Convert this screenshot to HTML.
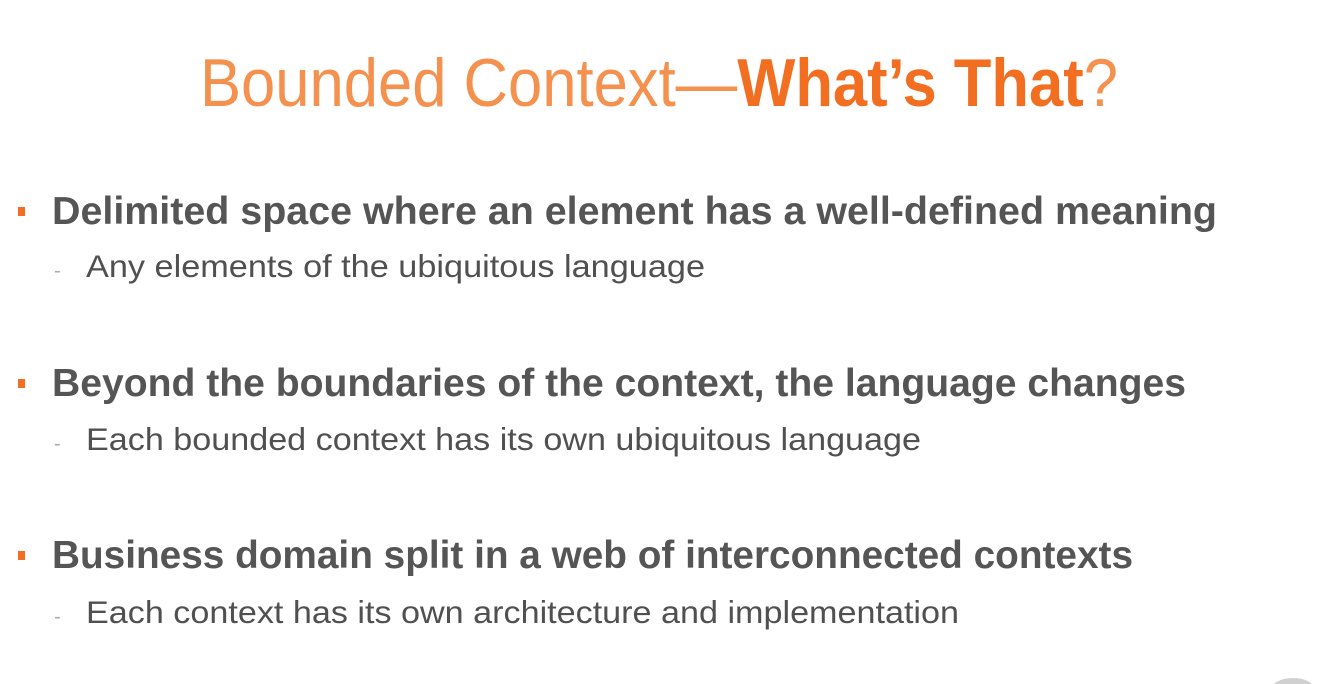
<!DOCTYPE html>
<html><head><meta charset="utf-8"><style>
html,body{margin:0;padding:0;background:#fff;width:1329px;height:684px;overflow:hidden}
svg{display:block}
</style></head><body>
<svg width="1329" height="684" viewBox="0 0 1329 684" xmlns="http://www.w3.org/2000/svg" font-family="Liberation Sans, sans-serif">
<text x="200" y="106" font-size="68" fill="#f4914f" textLength="918" lengthAdjust="spacingAndGlyphs">Bounded Context—<tspan fill="#f26e21" font-weight="bold">What’s That</tspan>?</text>
<g fill="#f26e21">
<rect x="18" y="207" width="7" height="9"/>
<rect x="18" y="379" width="7" height="9"/>
<rect x="18" y="551" width="7" height="9"/>
</g>
<g fill="#555" font-weight="bold" font-size="39">
<text x="52" y="224" textLength="1165" lengthAdjust="spacingAndGlyphs">Delimited space where an element has a well-defined meaning</text>
<text x="52" y="396" textLength="1134" lengthAdjust="spacingAndGlyphs">Beyond the boundaries of the context, the language changes</text>
<text x="52" y="568" textLength="1081" lengthAdjust="spacingAndGlyphs">Business domain split in a web of interconnected contexts</text>
</g>
<g fill="#aaa" font-size="20">
<text x="54" y="277">-</text><text x="54" y="450">-</text><text x="54" y="623">-</text>
</g>
<g fill="#505050" font-size="31.5">
<text x="86" y="277" textLength="619" lengthAdjust="spacingAndGlyphs">Any elements of the ubiquitous language</text>
<text x="86" y="450" textLength="835" lengthAdjust="spacingAndGlyphs">Each bounded context has its own ubiquitous language</text>
<text x="86" y="623" textLength="873" lengthAdjust="spacingAndGlyphs">Each context has its own architecture and implementation</text>
</g>
<ellipse cx="1293" cy="690" rx="22" ry="12" fill="#d0d0d0"/>
</svg>
</body></html>
